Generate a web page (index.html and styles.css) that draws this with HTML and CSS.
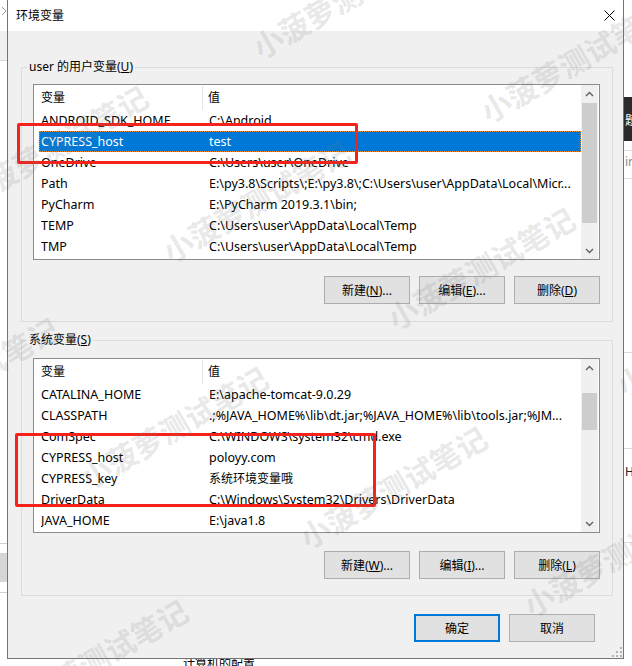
FILE: index.html
```html
<!DOCTYPE html>
<html lang="zh-CN">
<head>
<meta charset="utf-8">
<title>环境变量</title>
<link rel="stylesheet" href="styles.css">
</head>
<body>
<div class="bg-left">
  <svg class="bl-chev" width="6" height="10" viewBox="0 0 6 10"><polyline points="1,1 5,5 1,9" fill="none" stroke="#9a9a9a" stroke-width="1"/></svg>
  <div class="bl-band"></div>
  <div class="bl-line bl-line1"></div>
  <div class="bl-block"></div>
  <div class="bl-line bl-line2"></div>
</div>
<div class="bg-right">
  <div class="br-dark"><span>题</span></div>
  <div class="br-line br-l1"></div>
  <div class="br-text br-t1">ir</div>
  <div class="br-line br-l2"></div>
  <div class="br-line br-l3"></div>
  <div class="br-line br-l4"></div>
  <div class="br-text br-t2">H</div>
  <div class="br-line br-l5"></div>
</div>
<div class="bg-bottom">计算机的配置</div>

<div class="dialog">
  <div class="titlebar">
    <span class="title">环境变量</span>
    <svg class="close" width="11" height="11" viewBox="0 0 11 11"><path d="M0.5 0.5L10.5 10.5M10.5 0.5L0.5 10.5" stroke="#000" stroke-width="1" fill="none"/></svg>
  </div>
  <div class="content">
    <fieldset class="group group-user">
      <legend>user 的用户变量(<u>U</u>)</legend>
      <div class="group-inner inner-user">
        <div class="list list-user">
          <div class="list-main">
            <div class="lhead"><div class="hc1">变量</div><div class="hc2">值</div></div>
            <div class="row"><span>ANDROID_SDK_HOME</span><span>C:\Android</span></div>
            <div class="row sel"><span>CYPRESS_host</span><span>test</span></div>
            <div class="row"><span>OneDrive</span><span>C:\Users\user\OneDrive</span></div>
            <div class="row"><span>Path</span><span>E:\py3.8\Scripts\;E:\py3.8\;C:\Users\user\AppData\Local\Micr...</span></div>
            <div class="row"><span>PyCharm</span><span>E:\PyCharm 2019.3.1\bin;</span></div>
            <div class="row"><span>TEMP</span><span>C:\Users\user\AppData\Local\Temp</span></div>
            <div class="row"><span>TMP</span><span>C:\Users\user\AppData\Local\Temp</span></div>
          </div>
          <div class="sbar">
            <div class="sbtn"><svg width="9" height="6" viewBox="0 0 9 6"><polyline points="1,5 4.5,1.5 8,5" fill="none" stroke="#606060" stroke-width="1.4"/></svg></div>
            <div class="strack"><div class="thumb thumb-user"></div></div>
            <div class="sbtn"><svg width="9" height="6" viewBox="0 0 9 6"><polyline points="1,1 4.5,4.5 8,1" fill="none" stroke="#606060" stroke-width="1.4"/></svg></div>
          </div>
        </div>
        <div class="btns">
          <button class="btn">新建(<u>N</u>)...</button>
          <button class="btn">编辑(<u>E</u>)...</button>
          <button class="btn">删除(<u>D</u>)</button>
        </div>
      </div>
    </fieldset>

    <fieldset class="group group-sys">
      <legend>系统变量(<u>S</u>)</legend>
      <div class="group-inner inner-sys">
        <div class="list list-sys">
          <div class="list-main">
            <div class="lhead"><div class="hc1">变量</div><div class="hc2">值</div></div>
            <div class="row"><span>CATALINA_HOME</span><span>E:\apache-tomcat-9.0.29</span></div>
            <div class="row"><span>CLASSPATH</span><span>.;%JAVA_HOME%\lib\dt.jar;%JAVA_HOME%\lib\tools.jar;%JM...</span></div>
            <div class="row"><span>ComSpec</span><span>C:\WINDOWS\system32\cmd.exe</span></div>
            <div class="row"><span>CYPRESS_host</span><span>poloyy.com</span></div>
            <div class="row"><span>CYPRESS_key</span><span class="cjk">系统环境变量哦</span></div>
            <div class="row"><span>DriverData</span><span>C:\Windows\System32\Drivers\DriverData</span></div>
            <div class="row"><span>JAVA_HOME</span><span>E:\java1.8</span></div>
          </div>
          <div class="sbar">
            <div class="sbtn"><svg width="9" height="6" viewBox="0 0 9 6"><polyline points="1,5 4.5,1.5 8,5" fill="none" stroke="#606060" stroke-width="1.4"/></svg></div>
            <div class="strack"><div class="thumb thumb-sys"></div></div>
            <div class="sbtn"><svg width="9" height="6" viewBox="0 0 9 6"><polyline points="1,1 4.5,4.5 8,1" fill="none" stroke="#606060" stroke-width="1.4"/></svg></div>
          </div>
        </div>
        <div class="btns">
          <button class="btn">新建(<u>W</u>)...</button>
          <button class="btn">编辑(<u>I</u>)...</button>
          <button class="btn">删除(<u>L</u>)</button>
        </div>
      </div>
    </fieldset>

    <div class="footer">
      <button class="btn btn-default">确定</button>
      <button class="btn">取消</button>
    </div>
  </div>
  <svg class="grip" width="10" height="10" viewBox="0 0 10 10">
    <rect x="8" y="0" width="2" height="2" fill="#b4b4b4"/>
    <rect x="4" y="4" width="2" height="2" fill="#b4b4b4"/>
    <rect x="8" y="4" width="2" height="2" fill="#b4b4b4"/>
    <rect x="0" y="8" width="2" height="2" fill="#b4b4b4"/>
    <rect x="4" y="8" width="2" height="2" fill="#b4b4b4"/>
    <rect x="8" y="8" width="2" height="2" fill="#b4b4b4"/>
  </svg>
</div>

<div class="mark mark1"></div>
<div class="mark mark2"></div>

<span class="wm wm1">小菠萝测试笔记</span>
<span class="wm wm2">小菠萝测试笔记</span>
<span class="wm wm3">小菠萝测试笔记</span>
<span class="wm wm4">小菠萝测试笔记</span>
<span class="wm wm5">小菠萝测试笔记</span>
<span class="wm wm6">小菠萝测试笔记</span>
<span class="wm wm7">小菠萝测试笔记</span>
<span class="wm wm8">小菠萝测试笔记</span>
<span class="wm wm9">小菠萝测试笔记</span>
<span class="wm wm10">小菠萝测试笔记</span>
<span class="wm wm11">小菠萝测试笔记</span>
</body>
</html>
```
FILE: styles.css
```css
* { box-sizing: border-box; }
html, body { margin: 0; padding: 0; }
body {
  width: 632px;
  height: 666px;
  overflow: hidden;
  position: relative;
  background: #fff;
  font-family: "Noto Sans", "Noto Sans CJK SC", sans-serif;
  font-size: 12px;
  color: #000;
}

/* background windows */
.bg-left { position: absolute; left: 0; top: 0; width: 7px; height: 666px; overflow: hidden; }
.bl-chev { position: absolute; left: 1px; top: 6px; }
.bl-band { position: absolute; left: 0; top: 31px; width: 7px; height: 30px; background: #f0f0f0; border-bottom: 1px solid #d8d8d8; }
.bl-line { position: absolute; left: 0; width: 7px; height: 1px; background: #cfcfcf; }
.bl-line1 { top: 543px; }
.bl-line2 { top: 592px; }
.bl-block { position: absolute; left: 0; top: 553px; width: 7px; height: 29px; background: #d6d6d6; }

.bg-right { position: absolute; left: 624px; top: 0; width: 8px; height: 666px; overflow: hidden; }
.br-dark { position: absolute; left: 0; top: 97px; width: 8px; height: 44px; background: #2b2b2b; color: #fff; overflow: hidden; }
.br-dark span { position: absolute; left: 1px; top: 14px; font-size: 12px; }
.br-line { position: absolute; left: 0; width: 8px; height: 1px; background: #dcdcdc; }
.br-l1 { top: 150px; }
.br-l2 { top: 178px; }
.br-l3 { top: 352px; }
.br-l4 { top: 448px; }
.br-l5 { top: 542px; }
.br-text { position: absolute; left: 1px; font-size: 12px; line-height: 14px; }
.br-t1 { top: 155px; color: #8a8a8a; }
.br-t2 { top: 465px; color: #222; }

.bg-bottom { position: absolute; left: 183px; top: 657px; font-size: 12px; line-height: 14px; }

/* dialog */
.dialog {
  position: absolute;
  left: 7px;
  top: -1px;
  width: 617px;
  height: 660px;
  border: 1px solid #747474;
  background: #f0f0f0;
  display: flex;
  flex-direction: column;
  z-index: 1;
}
.titlebar {
  height: 31px;
  flex: none;
  background: #fff;
  display: flex;
  align-items: center;
  padding-left: 8px;
}
.title { font-size: 12px; line-height: 31px; }
.close { margin-left: auto; margin-right: 8px; }

.content { flex: 1; display: flex; flex-direction: column; }

.group {
  margin: 0 10px 0 13px;
  padding: 0;
  border: 1px solid #dcdcdc;
  min-width: 0;
}
.group-user { margin-top: 28px; }
.group-sys { margin-top: 10px; }
.group legend {
  margin-left: 5px;
  padding: 0 2px;
  line-height: 16px;
  font-size: 12px;
}
.group-inner { padding: 9px 12px 17px 11px; }
.inner-sys { padding: 10px 12px 16px 11px; }

.list {
  border: 1px solid #8c8c8c;
  background: #fff;
  display: flex;
  padding-right: 1px;
}
.list-user { height: 176px; }
.list-sys { height: 175px; }
.list-main { flex: 1; min-width: 0; overflow: hidden; }
.lhead { height: 25px; display: flex; line-height: 24px; padding-top: 1px; }
.hc1 { width: 169px; padding-left: 7px; border-right: 1px solid #e5e5e5; }
.hc2 { padding-left: 5px; }
.row {
  height: 21px;
  line-height: 20px;
  padding-top: 1px;
  margin-left: 5px;
  padding-left: 2px;
  display: grid;
  grid-template-columns: 168px 1fr;
  white-space: nowrap;
  overflow: hidden;
  font-size: 12.5px;
}
.row span { overflow: hidden; }
.row .cjk { font-size: 12px; }
.row.sel {
  background: #0078d7;
  color: #fff;
  outline: 1px dotted #f08a24;
  outline-offset: -1px;
}

.sbar { width: 17px; flex: none; display: flex; flex-direction: column; background: #f0f0f0; }
.sbtn { height: 17px; flex: none; display: flex; align-items: center; justify-content: center; }
.strack { flex: 1; }
.thumb { background: #cdcdcd; margin: 0 1px; }
.thumb-user { margin-top: 1px; height: 120px; }
.thumb-sys { margin-top: 17px; height: 37px; }

.btns { display: flex; justify-content: flex-end; gap: 9px; margin-top: 16px; }
.inner-sys .btns { margin-top: 18px; }
.btn {
  width: 86px;
  height: 28px;
  padding: 0;
  border: 1px solid #adadad;
  background: #e1e1e1;
  font-family: inherit;
  font-size: 12px;
  color: #000;
}
.btn-default { border: 2px solid #0078d7; }

.footer { display: flex; justify-content: flex-end; gap: 9px; margin-top: 18px; margin-right: 28px; }

.grip { position: absolute; right: 1px; bottom: 1px; }

/* annotations */
.mark { position: absolute; border: 3px solid #f5221b; border-radius: 2px; z-index: 2; }
.mark1 { left: 17px; top: 123px; width: 341px; height: 41px; }
.mark2 { left: 15px; top: 433px; width: 361px; height: 74px; }

/* watermark */
.wm {
  position: absolute;
  z-index: 3;
  font-family: "Noto Sans CJK SC", sans-serif;
  font-weight: 700;
  font-size: 30px;
  line-height: 30px;
  color: rgba(120, 120, 120, 0.18);
  white-space: nowrap;
  transform-origin: 0 100%;
  transform: rotate(-30deg);
  pointer-events: none;
}
.wm1 { left: 262px; top: 32px; }
.wm2 { left: 490px; top: 96px; }
.wm3 { left: -30px; top: 181px; }
.wm4 { left: 172px; top: 236px; }
.wm5 { left: 397px; top: 303px; }
.wm6 { left: -119px; top: 413px; }
.wm7 { left: 90px; top: 462px; }
.wm8 { left: 309px; top: 522px; }
.wm9 { left: 533px; top: 590px; }
.wm10 { left: 626px; top: 370px; }
.wm11 { left: 10px; top: 695px; }
```
